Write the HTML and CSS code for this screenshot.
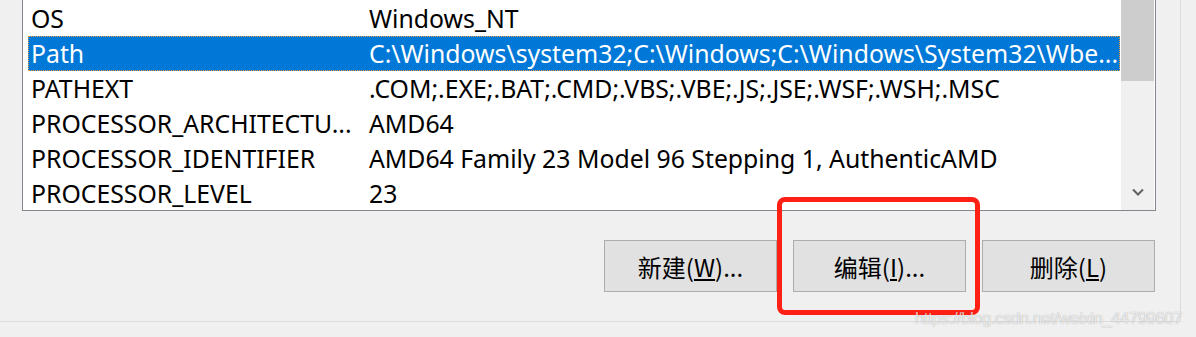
FILE: index.html
```html
<!DOCTYPE html>
<html lang="zh-CN">
<head>
    <meta charset="UTF-8">
    <meta name="viewport" content="width=device-width, initial-scale=1.0">
    <title>环境变量</title>
    <link rel="stylesheet" href="styles.css">
</head>
<body>

<div class="group">
    <div class="listbox">
        <div class="rows">
            <div class="row"><span class="name">OS</span><span class="value">Windows_NT</span></div>
            <div class="row selected"><span class="name">Path</span><span class="value">C:\Windows\system32;C:\Windows;C:\Windows\System32\Wbe...</span></div>
            <div class="row"><span class="name">PATHEXT</span><span class="value">.COM;.EXE;.BAT;.CMD;.VBS;.VBE;.JS;.JSE;.WSF;.WSH;.MSC</span></div>
            <div class="row"><span class="name">PROCESSOR_ARCHITECTU...</span><span class="value">AMD64</span></div>
            <div class="row"><span class="name">PROCESSOR_IDENTIFIER</span><span class="value">AMD64 Family 23 Model 96 Stepping 1, AuthenticAMD</span></div>
            <div class="row"><span class="name">PROCESSOR_LEVEL</span><span class="value">23</span></div>
        </div>
        <div class="scrollbar">
            <div class="thumb"></div>
            <svg class="arrow" width="12" height="8" viewBox="0 0 12 8">
                <path d="M1 1.5 L6 6.5 L11 1.5" fill="none" stroke="#606060" stroke-width="2"/>
            </svg>
        </div>
    </div>

    <div class="buttons">
        <button type="button">新建(<u>W</u>)...</button>
        <button type="button">编辑(<u>I</u>)...</button>
        <button type="button">删除(<u>L</u>)</button>
    </div>
</div>

<div class="highlight"></div>
<div class="watermark">https://blog.csdn.net/weixin_44799607</div>

</body>
</html>
```

FILE: styles.css
```css
html, body {
    margin: 0;
    height: 100%;
}
body {
    position: relative;
    width: 1196px;
    height: 337px;
    overflow: hidden;
    background-color: #f0f0f0;
    font-family: "Noto Sans", "Noto Sans CJK SC", sans-serif;
    color: #000;
}
.group {
    width: 1158px;
    height: 321px;
    padding-left: 22px;
    border-right: 1px solid #dcdcdc;
    border-bottom: 1px solid #dcdcdc;
}
.listbox {
    display: flex;
    width: 1132px;
    height: 210px;
    border: 1px solid #828790;
    border-top: none;
    background-color: #fff;
}
.rows {
    flex: 1;
    padding: 1px 1px 0 5px;
}
.row {
    display: flex;
    align-items: center;
    height: 35px;
    padding-left: 3px;
    box-sizing: border-box;
    font-size: 24.8px;
    line-height: 1;
    white-space: nowrap;
}
.row .name {
    width: 338px;
}
.selected {
    background-color: #0078d7;
    color: #fff;
    outline: 1px dotted #e89a3c;
    outline-offset: -1px;
}
.scrollbar {
    position: relative;
    width: 33px;
    margin-right: 1px;
    background-color: #f0f0f0;
}
.thumb {
    height: 81px;
    background-color: #cdcdcd;
}
.arrow {
    position: absolute;
    left: 11px;
    bottom: 14px;
}
.buttons {
    display: flex;
    justify-content: flex-end;
    gap: 16px;
    width: 1133px;
    margin-top: 29px;
}
button {
    width: 173px;
    height: 52px;
    padding: 0;
    background-color: #e1e1e1;
    border: 1px solid #adadad;
    font-family: "Noto Sans CJK SC", "Noto Sans", sans-serif;
    font-size: 24px;
    color: #000;
}
.highlight {
    position: absolute;
    left: 777px;
    top: 197px;
    width: 193px;
    height: 108px;
    border: 5px solid #fe2015;
    border-radius: 8px;
}
.watermark {
    position: absolute;
    left: 915px;
    top: 309px;
    font-family: "Liberation Sans", Arial, sans-serif;
    font-size: 17px;
    letter-spacing: -0.6px;
    color: rgba(255, 255, 255, 0.75);
    text-shadow: 0 0 1px rgba(0, 0, 0, 0.35);
    white-space: nowrap;
}
```
